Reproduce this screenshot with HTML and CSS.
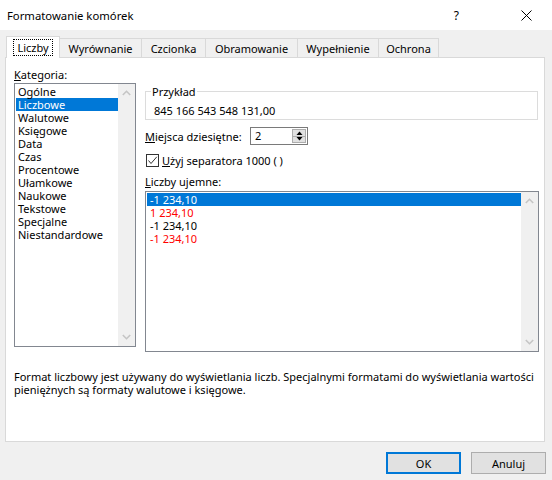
FILE: index.html
```html
<!DOCTYPE html>
<html lang="pl">
<head>
<meta charset="utf-8">
<title>Formatowanie komórek</title>
<link rel="stylesheet" href="styles.css">
</head>
<body>
<div class="dialog">
  <div class="titlebar">
    <span class="title">Formatowanie komórek</span>
    <span class="help">?</span>
    <span class="close"><svg width="11" height="11" viewBox="0 0 11 11"><path d="M0.5 0.5L10.5 10.5M10.5 0.5L0.5 10.5" stroke="#000" stroke-width="1" fill="none"/></svg></span>
  </div>
  <div class="tabs">
    <div class="tab active w1"><span class="focus">Liczby</span></div>
    <div class="tab w2">Wyrównanie</div>
    <div class="tab w3">Czcionka</div>
    <div class="tab w4">Obramowanie</div>
    <div class="tab w5">Wypełnienie</div>
    <div class="tab w6">Ochrona</div>
  </div>
  <div class="panel">
    <div class="cols">
      <div class="leftcol">
        <div class="label"><u>K</u>ategoria:</div>
        <div class="listbox cat">
          <ul class="items">
            <li>Ogólne</li>
            <li class="sel">Liczbowe</li>
            <li>Walutowe</li>
            <li>Księgowe</li>
            <li>Data</li>
            <li>Czas</li>
            <li>Procentowe</li>
            <li>Ułamkowe</li>
            <li>Naukowe</li>
            <li>Tekstowe</li>
            <li>Specjalne</li>
            <li>Niestandardowe</li>
          </ul>
          <div class="scroll">
            <svg width="9" height="6" viewBox="0 0 9 6"><polyline points="0.8,5 4.5,1.3 8.2,5" fill="none" stroke="#c5c5c5" stroke-width="1.6"/></svg>
            <svg width="9" height="6" viewBox="0 0 9 6"><polyline points="0.8,1 4.5,4.7 8.2,1" fill="none" stroke="#c5c5c5" stroke-width="1.6"/></svg>
          </div>
        </div>
      </div>
      <div class="rightcol">
        <fieldset class="sample">
          <legend>Przykład</legend>
          <div class="sample-value">845 166 543 548 131,00</div>
        </fieldset>
        <div class="row decimals">
          <span class="row-label"><u>M</u>iejsca dziesiętne:</span>
          <div class="spinner">
            <span class="spin-value">2</span>
            <div class="spin-buttons">
              <span class="spin-btn"><svg width="7" height="4" viewBox="0 0 7 4"><polygon points="0.5,4 3.5,0.5 6.5,4" fill="#000"/></svg></span>
              <span class="spin-btn"><svg width="7" height="4" viewBox="0 0 7 4"><polygon points="0.5,0 3.5,3.5 6.5,0" fill="#000"/></svg></span>
            </div>
          </div>
        </div>
        <div class="row check">
          <span class="checkbox"><svg width="11" height="11" viewBox="0 0 11 11"><polyline points="1.5,5.5 4,8.5 9.8,1.8" fill="none" stroke="#333" stroke-width="1"/></svg></span>
          <span class="check-label"><u>U</u>żyj separatora 1000 ( )</span>
        </div>
        <div class="label neg-label"><u>L</u>iczby ujemne:</div>
        <div class="listbox neg">
          <ul class="items">
            <li class="sel">-1 234,10</li>
            <li class="red">1 234,10</li>
            <li>-1 234,10</li>
            <li class="red">-1 234,10</li>
          </ul>
          <div class="scroll">
            <svg width="9" height="6" viewBox="0 0 9 6"><polyline points="0.8,5 4.5,1.3 8.2,5" fill="none" stroke="#c5c5c5" stroke-width="1.6"/></svg>
            <svg width="9" height="6" viewBox="0 0 9 6"><polyline points="0.8,1 4.5,4.7 8.2,1" fill="none" stroke="#c5c5c5" stroke-width="1.6"/></svg>
          </div>
        </div>
      </div>
    </div>
    <p class="desc">Format liczbowy jest używany do wyświetlania liczb. Specjalnymi formatami do wyświetlania wartości pieniężnych są formaty walutowe i księgowe.</p>
  </div>
  <div class="footer">
    <button class="btn ok">OK</button>
    <button class="btn">Anuluj</button>
  </div>
</div>
</body>
</html>
```

FILE: styles.css
```css
* { box-sizing: border-box; }
html, body {
  margin: 0;
  padding: 0;
  background: #f0f0f0;
}
body {
  font-family: "Noto Sans", "Open Sans", sans-serif;
  font-size: 11px;
  color: #000;
  width: 552px;
  height: 480px;
  overflow: hidden;
}
u { text-decoration: underline; text-underline-offset: 1px; }

.titlebar {
  height: 30px;
  background: #fff;
  display: flex;
  align-items: center;
}
.title {
  padding-left: 7px;
  font-size: 11.3px;
  flex: 1;
}
.help {
  font-size: 12px;
  margin-right: 62px;
}
.close {
  display: flex;
  margin-right: 20px;
}

.tabs {
  display: flex;
  align-items: flex-end;
  height: 27px;
  padding-left: 6px;
}
.tab {
  height: 19px;
  display: flex;
  align-items: center;
  justify-content: center;
  background: #f0f0f0;
  border: 1px solid #d9d9d9;
  border-bottom: none;
  margin-left: -1px;
  line-height: 13px;
}
.tab.active {
  height: 22px;
  background: #fff;
  margin-left: 0;
  margin-bottom: -1px;
  position: relative;
  z-index: 1;
  padding-bottom: 1px;
}
.focus {
  border: 1px dotted #000;
  padding: 1px 3px;
}
.w1 { width: 54px; }
.w2 { width: 83px; }
.w3 { width: 65px; }
.w4 { width: 93px; }
.w5 { width: 82px; }
.w6 { width: 61px; }

.panel {
  margin-left: 5px;
  width: 540px;
  height: 385px;
  background: #fff;
  border: 1px solid #d9d9d9;
  padding: 10px 0 0 8px;
}
.cols {
  display: flex;
}
.leftcol {
  width: 122px;
}
.rightcol {
  width: 394px;
  margin-left: 9px;
}
.label {
  line-height: 13px;
  height: 13px;
  margin-bottom: 2px;
}

.listbox {
  border: 1px solid #828790;
  background: #fff;
  display: flex;
  padding: 1px 0 0 1px;
}
.listbox.cat { height: 264px; }
.listbox.neg { height: 161px; }
.items {
  list-style: none;
  margin: 0;
  padding: 0;
  flex: 1;
}
.items li {
  line-height: 13px;
  height: 13px;
  padding-left: 2px;
  white-space: nowrap;
}
.neg .items li { padding-left: 3px; }
.items li.sel {
  background: #0078d7;
  color: #fff;
}
.items li.red { color: #ff0000; }
.scroll {
  width: 17px;
  margin-top: -1px;
  background: #f0f0f0;
  display: flex;
  flex-direction: column;
  justify-content: space-between;
  align-items: center;
  padding: 6px 0 6px;
}

.sample {
  margin: 17px 0 0 0;
  width: 393px;
  border: 1px solid #dcdcdc;
  padding: 6px 0 2px 8px;
  min-width: 0;
}
.sample legend {
  padding: 0 1px;
  margin-left: -3px;
  line-height: 13px;
}
.sample-value {
  line-height: 13px;
}

.row {
  display: flex;
  align-items: center;
}
.decimals {
  margin-top: 7px;
  height: 18px;
}
.row-label {
  width: 105px;
}
.spinner {
  width: 58px;
  height: 18px;
  border: 1px solid #7a7a7a;
  display: flex;
  background: #fff;
}
.spin-value {
  flex: 1;
  padding-left: 4px;
  line-height: 16px;
}
.spin-buttons {
  width: 15px;
  display: flex;
  flex-direction: column;
  padding: 1px 1px 1px 0;
}
.spin-btn {
  flex: 1;
  background: #e1e1e1;
  border: 1px solid #adadad;
  display: flex;
  align-items: center;
  justify-content: center;
}
.spin-btn + .spin-btn { border-top: none; }

.check {
  margin-top: 9px;
  height: 13px;
}
.checkbox {
  width: 13px;
  height: 13px;
  margin-left: 1px;
  border: 1px solid #333;
  display: flex;
  align-items: center;
  justify-content: center;
  background: #fff;
}
.check-label {
  margin-left: 3px;
  line-height: 13px;
}
.neg-label {
  margin-top: 8px;
  margin-bottom: 3px;
}

.desc {
  margin: 18px 0 0 0;
  line-height: 13px;
  width: 520px;
}

.footer {
  display: flex;
  justify-content: flex-end;
  gap: 10px;
  padding-right: 6px;
  margin-top: 10px;
}
.btn {
  width: 75px;
  height: 22px;
  font-family: inherit;
  font-size: 11px;
  background: #e1e1e1;
  border: 1px solid #adadad;
  padding: 0;
  color: #000;
}
.btn.ok {
  border: 2px solid #0078d7;
}
```
